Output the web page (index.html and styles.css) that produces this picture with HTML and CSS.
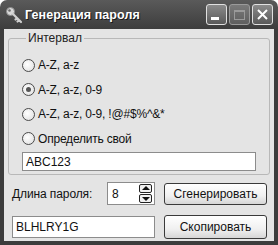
FILE: index.html
```html
<!DOCTYPE html>
<html lang="ru">
<head>
    <meta charset="UTF-8">
    <title>Генерация пароля</title>
    <link rel="stylesheet" href="styles.css">
</head>
<body>
    <div class="window">
        <div class="titlebar">
            <svg class="app-icon" width="18" height="18" viewBox="0 0 18 18">
                <circle cx="5.5" cy="5.5" r="4" fill="#d8d8d8" stroke="#8a8a8a" stroke-width="1"/>
                <circle cx="4.5" cy="4.5" r="1.3" fill="#6a6a6a"/>
                <path d="M8 8 L16 16 M12 12 L10.5 13.5 M14 14 L12.5 15.5" stroke="#d0d0d0" stroke-width="2.2" stroke-linecap="round"/>
            </svg>
            <span class="title">Генерация пароля</span>
            <div class="caption-buttons">
                <div class="cap-btn minimize"><span></span></div>
                <div class="cap-btn maximize"><span></span></div>
                <div class="cap-btn close">
                    <svg width="13" height="13" viewBox="0 0 13 13">
                        <path d="M2 2 L11 11 M11 2 L2 11" stroke="#fff" stroke-width="2"/>
                    </svg>
                </div>
            </div>
        </div>

        <div class="client">
            <fieldset class="group">
                <legend>Интервал</legend>
                <label class="radio"><span class="dot"></span>A-Z, a-z</label>
                <label class="radio checked"><span class="dot"></span>A-Z, a-z, 0-9</label>
                <label class="radio"><span class="dot"></span>A-Z, a-z, 0-9, !@#$%^&amp;*</label>
                <label class="radio"><span class="dot"></span>Определить свой</label>
                <div class="textbox custom">ABC123</div>
            </fieldset>

            <div class="controls">
                <span class="len-label">Длина пароля:</span>
                <div class="textbox spinner">
                    <span>8</span>
                    <div class="arrows">
                        <div class="arrow up"></div>
                        <div class="arrow down"></div>
                    </div>
                </div>
                <div class="button">Сгенерировать</div>
                <div class="textbox result">BLHLRY1G</div>
                <div class="button copy">Скопировать</div>
            </div>
        </div>
    </div>
</body>
</html>
```

FILE: styles.css
```css
* {
  margin: 0;
  padding: 0;
  box-sizing: border-box;
}

body {
  background-color: #ffffff;
  font-family: "Liberation Sans", Arial, sans-serif;
  font-size: 12px;
  color: #111;
}

.window {
  width: 278px;
  height: 245px;
  background: linear-gradient(#5a5a5a, #3c3c3c 30px, #3c3c3c);
  border-radius: 7px 7px 0 0;
  display: flex;
  flex-direction: column;
}

.titlebar {
  height: 29px;
  display: flex;
  align-items: center;
  padding: 0 5px 0 5px;
}

.app-icon {
  margin-right: 2px;
}

.title {
  color: #fff;
  font-family: "Liberation Sans", Arial, sans-serif;
  font-weight: bold;
  font-size: 12.5px;
  letter-spacing: 0.1px;
  text-shadow: 1px 1px 0 #1a1a1a;
  flex: 1;
}

.caption-buttons {
  display: flex;
  gap: 2px;
}

.cap-btn {
  width: 21px;
  height: 21px;
  border: 1px solid #e0e0e0;
  border-radius: 3px;
  background: linear-gradient(#8a8a8a, #5a5a5a);
  display: flex;
  align-items: center;
  justify-content: center;
}

.minimize span {
  width: 8px;
  height: 3px;
  background: #fff;
  margin-top: 8px;
  margin-right: 3px;
}

.maximize {
  border-color: #9a9a9a;
  background: linear-gradient(#7a7a7a, #5e5e5e);
}

.maximize span {
  width: 11px;
  height: 10px;
  border: 1px solid #9a9a9a;
  border-top-width: 2px;
}

.client {
  flex: 1;
  margin: 0 4px 4px 4px;
  background-color: #e4e4e4;
  padding: 2px 4px 0 4px;
}

.group {
  border: 1px solid #b8b8b8;
  border-radius: 3px;
  height: 144px;
  padding: 8px 13px 0 13px;
}

.group legend {
  padding: 0 2px;
  margin-left: 4px;
  font-size: 12px;
  color: #222;
}

.radio {
  display: flex;
  align-items: center;
  height: 24.5px;
  font-size: 12px;
  letter-spacing: -0.2px;
}

.dot {
  width: 13px;
  height: 13px;
  border: 1px solid #4a4a4a;
  border-radius: 50%;
  background: radial-gradient(circle at 40% 40%, #ffffff, #dcdcdc);
  margin-right: 3px;
  display: flex;
  align-items: center;
  justify-content: center;
}

.checked .dot::after {
  content: "";
  width: 5px;
  height: 5px;
  border-radius: 50%;
  background: #555;
}

.textbox {
  background: #fff;
  border: 1px solid #8c8c8c;
  font-size: 12px;
  display: flex;
  align-items: center;
  padding-left: 3px;
}

.custom {
  height: 19px;
  margin-top: 1px;
}

.controls {
  display: grid;
  grid-template-columns: 95px 48px 112px;
  row-gap: 10px;
  margin: 7px 0 0 4px;
  align-items: center;
}

.len-label {
  letter-spacing: -0.1px;
}

.spinner {
  height: 23px;
  justify-content: space-between;
  padding: 0 2px 0 4px;
}

.arrows {
  display: flex;
  flex-direction: column;
  gap: 1px;
}

.arrow {
  width: 13px;
  height: 9px;
  border: 1px solid #222;
  border-radius: 2px;
  background: #f0f0f0;
  position: relative;
}

.arrow::after {
  content: "";
  position: absolute;
  left: 2px;
  border-left: 4px solid transparent;
  border-right: 4px solid transparent;
}

.up::after {
  top: 1px;
  border-bottom: 4px solid #111;
}

.down::after {
  top: 2px;
  border-top: 4px solid #111;
}

.button {
  height: 22px;
  margin-left: 9px;
  border: 1px solid #3a3a3a;
  border-radius: 3px;
  background: linear-gradient(#ffffff, #f0f0f0 60%, #d6d6d6);
  display: flex;
  align-items: center;
  justify-content: center;
  font-size: 12px;
}

.result {
  grid-column: 1 / 3;
  height: 22px;
}

.copy {
  height: 24px;
}
```
